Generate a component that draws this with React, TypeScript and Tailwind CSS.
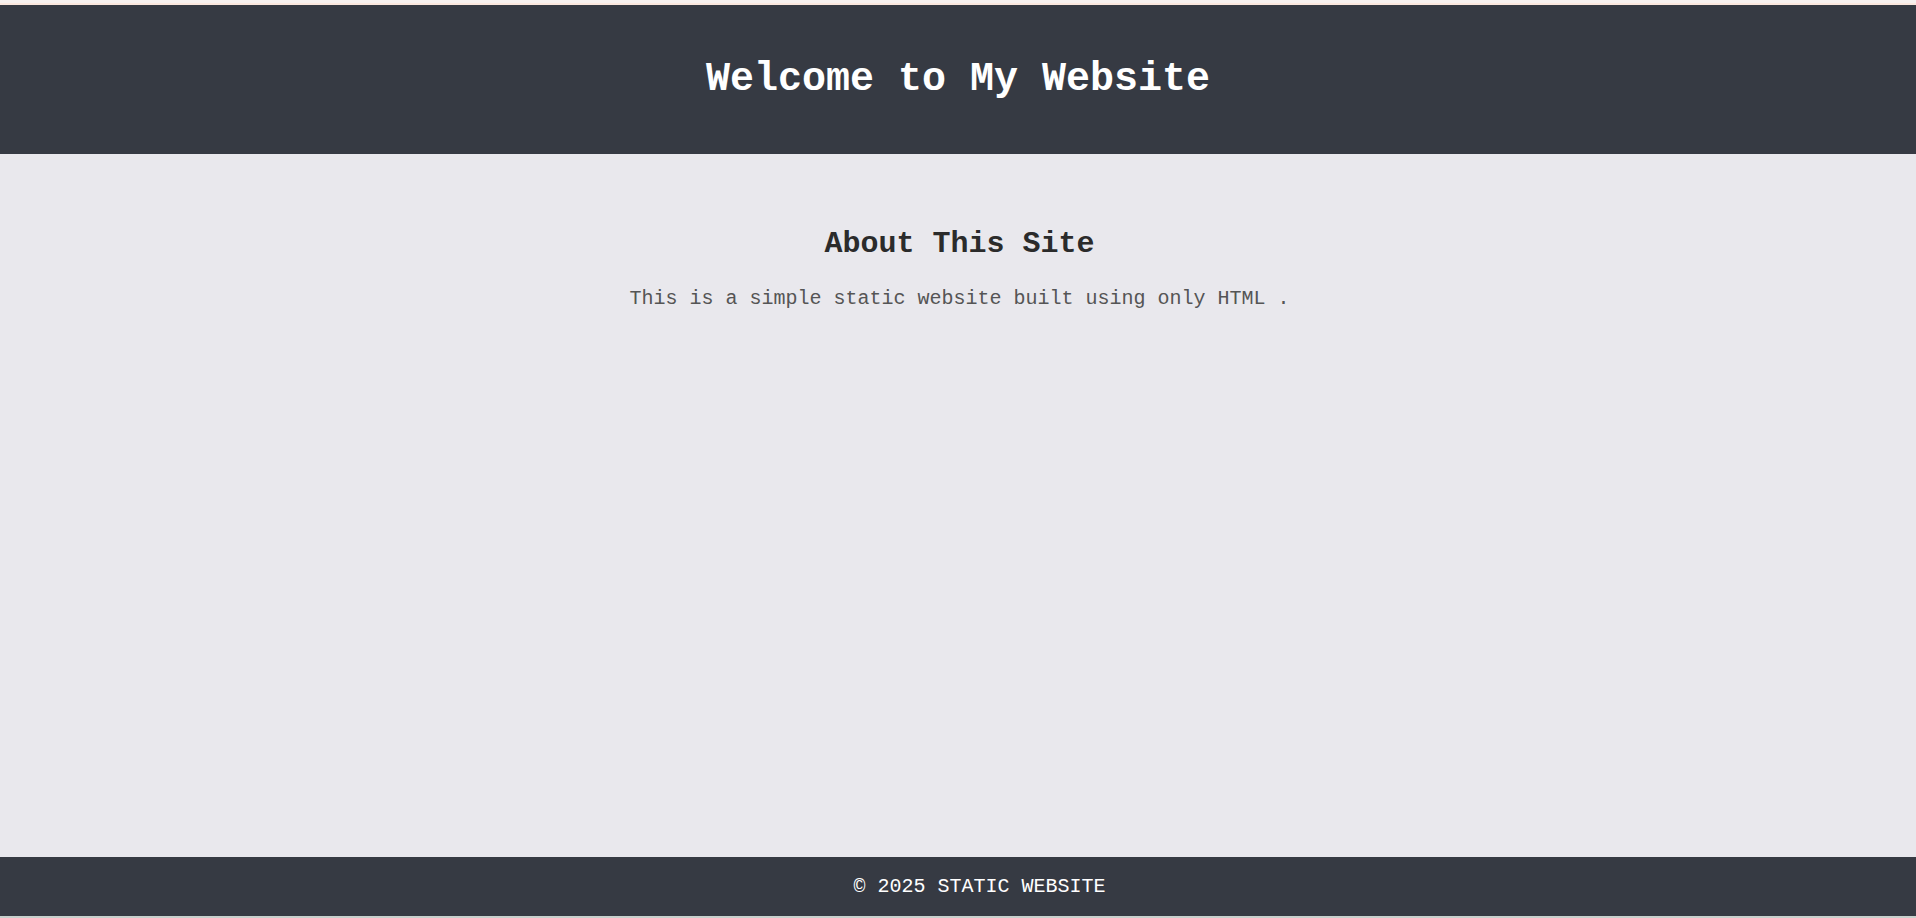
export default function App() {
  return (
    <div className="flex min-h-screen flex-col bg-[#e9e8ed] font-['Liberation_Mono','Courier_New',monospace]">
      {/* thin strip above the header */}
      <div className="h-[3px] bg-[#f7f1ef]" />
      <div className="h-[2px] bg-[#fbe8df]" />

      <header className="flex h-[149px] items-center justify-center bg-[#363a43]">
        <h1 className="text-[40px] font-bold leading-none text-white">Welcome to My Website</h1>
      </header>

      <main className="flex flex-1 flex-col items-center pt-[73px] pl-[3px]">
        <h2 className="text-[30px] font-bold leading-[34px] text-[#2b2b2b]">About This Site</h2>
        <p className="mt-[26px] text-[20px] leading-[23px] text-[#555]">
          This is a simple static website built using only HTML .
        </p>
      </main>

      <footer className="flex h-[59px] items-center justify-center bg-[#363a43] pl-[43px]">
        <p className="text-[20px] leading-none text-white">© 2025 STATIC WEBSITE</p>
      </footer>
      <div className="h-[2px] bg-[#c8d0cc]" />
    </div>
  );
}
